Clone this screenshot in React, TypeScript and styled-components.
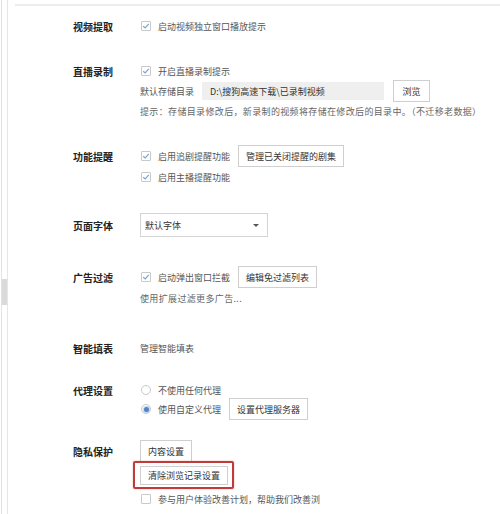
import React from 'react';
import styled, {createGlobalStyle} from 'styled-components';

const Global = createGlobalStyle`
  html, body {
    margin: 0;
    padding: 0;
    background: #fff;
  }
  body {
    font-family: "Noto Sans CJK SC", "Noto Sans", sans-serif;
    color: #333;
    font-size: 9px;
  }
`

const Page = styled.div`
  display: flex;
  width: 500px;
  height: 514px;
  overflow: hidden;
`

const SideRail = styled.div`
  width: 7px;
  flex-shrink: 0;
  display: flex;
  justify-content: center;
  border-left: 1px solid #e2e2e2;
  border-right: 1px solid #e6e6e6;
  margin-left: 1px;
  box-sizing: border-box;
  padding-top: 279px;
`

const RailThumb = styled.div`
  width: 5px;
  height: 26px;
  background: #dadada;
`

const Main = styled.div`
  flex: 1;
`

const TopLine = styled.div`
  height: 2px;
  background: #ececec;
  margin: 4px 0 0 7px;
`

const Settings = styled.div`
  padding-left: 65px;
  padding-top: 11px;
`

const Section = styled.div<{ gap: number }>`
  display: grid;
  grid-template-columns: 67px 1fr;
  margin-top: ${p => p.gap}px;
`

const Label = styled.div<{ h: number }>`
  font-size: 10px;
  font-weight: bold;
  color: #222;
  height: ${p => p.h}px;
  display: flex;
  align-items: center;
`

const Lines = styled.div`
  display: flex;
  flex-direction: column;
`

const Line = styled.div<{ h: number }>`
  height: ${p => p.h}px;
  display: flex;
  align-items: center;
  white-space: nowrap;
`

const Box = styled.span<{ round?: boolean }>`
  width: 10px;
  height: 10px;
  box-sizing: border-box;
  border: 1px solid #c9c9c9;
  border-radius: ${p => p.round ? '50%' : '1px'};
  background: #fff;
  display: inline-flex;
  align-items: center;
  justify-content: center;
  margin-left: 1px;
  margin-right: 7px;
  flex-shrink: 0;
`

const Dot = styled.span`
  width: 5px;
  height: 5px;
  border-radius: 50%;
  background: #4f86c6;
  box-shadow: 0 0 1px 1px #b9d3ee;
`

const Muted = styled.span`
  color: #555;
`

const Hint = styled.span`
  color: #666;
  letter-spacing: 0.35px;
`

const Button = styled.div<{ ml?: number; w?: number; h?: number }>`
  height: ${p => p.h ?? 22}px;
  ${p => p.w ? `width: ${p.w}px;` : ''}
  box-sizing: border-box;
  border: 1px solid #cfcfcf;
  background: #fff;
  padding: 0 7px;
  margin-left: ${p => p.ml ?? 0}px;
  display: inline-flex;
  align-items: center;
  justify-content: center;
  color: #333;
`

const PathField = styled.div`
  width: 182px;
  height: 18px;
  background: #efefef;
  margin-left: 8px;
  padding-left: 8px;
  box-sizing: border-box;
  display: flex;
  align-items: center;
`

const Select = styled.div`
  width: 128px;
  height: 24px;
  box-sizing: border-box;
  border: 1px solid #d4d4d4;
  display: flex;
  align-items: center;
  justify-content: space-between;
  padding: 0 8px 0 4px;
`

const Arrow = styled.span`
  width: 0;
  height: 0;
  border-left: 3px solid transparent;
  border-right: 3px solid transparent;
  border-top: 3px solid #555;
`

const Highlight = styled.div`
  margin-left: -7px;
  height: 28px;
  box-sizing: border-box;
  border: 2px solid #c23b3b;
  border-radius: 2px;
  box-shadow: 0 0 2px rgba(190, 50, 50, 0.4);
  display: flex;
  align-items: center;
  padding: 0 4px 0 5px;
`

const Check = () => (
    <Box>
        <svg width="8" height="8" viewBox="0 0 8 8">
            <path d="M1.2 4.2 L3.2 6 L6.8 1.8" fill="none" stroke="#7aa6d2" strokeWidth="1.2"/>
        </svg>
    </Box>
)

const Radio = (props: { on?: boolean }) => (
    <Box round>{props.on && <Dot/>}</Box>
)

export default function App() {
    return (
        <Page>
            <Global/>
            <SideRail><RailThumb/></SideRail>
            <Main>
                <TopLine/>
                <Settings>
                    <Section gap={0}>
                        <Label h={18}>视频提取</Label>
                        <Lines>
                            <Line h={18}><Check/><Muted>启动视频独立窗口播放提示</Muted></Line>
                        </Lines>
                    </Section>

                    <Section gap={27}>
                        <Label h={18}>直播录制</Label>
                        <Lines>
                            <Line h={18}><Check/><Muted>开启直播录制提示</Muted></Line>
                            <Line h={22}>
                                <Muted>默认存储目录</Muted>
                                <PathField>D:\搜狗高速下载\已录制视频</PathField>
                                <Button ml={9} w={37}>浏览</Button>
                            </Line>
                            <Line h={18}><Hint>提示：存储目录修改后，新录制的视频将存储在修改后的目录中。（不迁移老数据）</Hint></Line>
                        </Lines>
                    </Section>

                    <Section gap={25}>
                        <Label h={22}>功能提醒</Label>
                        <Lines>
                            <Line h={22}>
                                <Check/><Muted>启用追剧提醒功能</Muted>
                                <Button ml={8}>管理已关闭提醒的剧集</Button>
                            </Line>
                            <Line h={20}><Check/><Muted>启用主播提醒功能</Muted></Line>
                        </Lines>
                    </Section>

                    <Section gap={26}>
                        <Label h={24}>页面字体</Label>
                        <Lines>
                            <Line h={24}>
                                <Select><span>默认字体</span><Arrow/></Select>
                            </Line>
                        </Lines>
                    </Section>

                    <Section gap={29}>
                        <Label h={22}>广告过滤</Label>
                        <Lines>
                            <Line h={22}>
                                <Check/><Muted>启动弹出窗口拦截</Muted>
                                <Button ml={8}>编辑免过滤列表</Button>
                            </Line>
                            <Line h={20}><Hint>使用扩展过滤更多广告...</Hint></Line>
                        </Lines>
                    </Section>

                    <Section gap={31}>
                        <Label h={18}>智能填表</Label>
                        <Lines>
                            <Line h={18}><Muted>管理智能填表</Muted></Line>
                        </Lines>
                    </Section>

                    <Section gap={25}>
                        <Label h={16}>代理设置</Label>
                        <Lines>
                            <Line h={16}><Radio/><Muted>不使用任何代理</Muted></Line>
                            <Line h={22}>
                                <Radio on/><Muted>使用自定义代理</Muted>
                                <Button ml={8}>设置代理服务器</Button>
                            </Line>
                        </Lines>
                    </Section>

                    <Section gap={20}>
                        <Label h={22}>隐私保护</Label>
                        <Lines>
                            <Line h={22}><Button>内容设置</Button></Line>
                            <Line h={26}>
                                <Highlight><Button h={19}>清除浏览记录设置</Button></Highlight>
                            </Line>
                            <Line h={22}><Box/><Muted>参与用户体验改善计划，帮助我们改善浏</Muted></Line>
                        </Lines>
                    </Section>
                </Settings>
            </Main>
        </Page>
    );
}
